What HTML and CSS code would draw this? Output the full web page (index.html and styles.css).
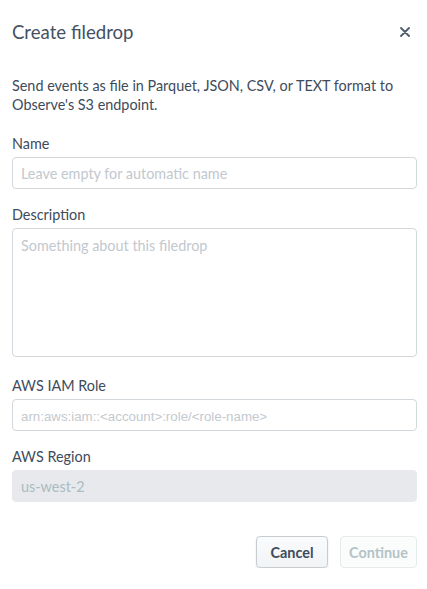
FILE: index.html
```html
<!DOCTYPE html>
<html>
<head>
<meta charset="utf-8">
<link rel="stylesheet" href="styles.css">
</head>
<body>
<div class="modal">
  <div class="header">
    <h1 class="title">Create filedrop</h1>
    <button class="close" aria-label="Close">
      <svg width="10" height="10" viewBox="0 0 10 10"><path d="M1 1L9 9M9 1L1 9" stroke="#4e5c6b" stroke-width="1.8" stroke-linecap="round"/></svg>
    </button>
  </div>
  <p class="intro">Send events as file in Parquet, JSON, CSV, or TEXT format to Observe's S3 endpoint.</p>
  <div class="field">
    <label class="label">Name</label>
    <input class="input" type="text" placeholder="Leave empty for automatic name">
  </div>
  <div class="field">
    <label class="label">Description</label>
    <textarea class="input textarea" placeholder="Something about this filedrop"></textarea>
  </div>
  <div class="field field-role">
    <label class="label">AWS IAM Role</label>
    <input class="input arn" type="text" placeholder="arn:aws:iam::<account>:role/<role-name>">
  </div>
  <div class="field">
    <label class="label">AWS Region</label>
    <input class="input disabled" type="text" value="us-west-2" disabled>
  </div>
  <div class="actions">
    <button class="btn cancel">Cancel</button>
    <button class="btn continue" disabled>Continue</button>
  </div>
</div>
</body>
</html>
```
FILE: styles.css
```css
html, body {
  margin: 0;
  padding: 0;
  background: #ffffff;
}
body {
  font-family: Lato, "Noto Sans", sans-serif;
  color: #3e4b5b;
}
.modal {
  padding: 0 10px 0 12px;
}
.header {
  display: flex;
  justify-content: space-between;
  align-items: center;
  padding-top: 20px;
}
.title {
  margin: 0;
  font-size: 18.6px;
  line-height: 24px;
  font-weight: 400;
  color: #435162;
}
.close {
  border: 0;
  background: none;
  padding: 0;
  margin-right: 7px;
  width: 10px;
  height: 10px;
  display: flex;
}
.intro {
  margin: 32px 0 0;
  font-size: 14.4px;
  line-height: 19px;
  color: #3e4b5b;
}
.field {
  display: flex;
  flex-direction: column;
  margin-top: 16px;
}
.intro + .field {
  margin-top: 20px;
}
.field-role {
  margin-top: 19px;
}
.label {
  font-size: 14.4px;
  line-height: 20px;
  color: #3e4b5b;
  margin-bottom: 3px;
}
.input {
  box-sizing: border-box;
  width: 100%;
  height: 32px;
  margin: 0;
  padding: 0 8px;
  border: 1px solid #d3d8dd;
  border-radius: 4px;
  background: #fff;
  font-family: Lato, "Noto Sans", sans-serif;
  font-size: 14.4px;
  color: #3e4b5b;
  outline: none;
}
.input::placeholder {
  color: #c2c8ce;
}
.textarea {
  height: 129px;
  padding: 8px;
  resize: none;
  display: block;
}
.arn::placeholder {
  font-family: "Liberation Sans", Arial, sans-serif;
  font-size: 13.3px;
  color: #c4c9ce;
}
.disabled {
  background: #e7e9ec;
  border-color: #e7e9ec;
  color: #a9bcc2;
  -webkit-text-fill-color: #a9bcc2;
  opacity: 1;
}
.actions {
  display: flex;
  justify-content: flex-end;
  gap: 12px;
  margin-top: 34px;
}
.btn {
  box-sizing: border-box;
  height: 32px;
  padding: 0;
  border-radius: 4px;
  font-family: Lato, "Noto Sans", sans-serif;
  font-size: 14.4px;
  font-weight: 700;
  text-align: center;
}
.cancel {
  width: 72px;
  background: linear-gradient(#fafbfc, #f1f3f5);
  border: 1px solid #c7ccd1;
  box-shadow: 0 1px 2px rgba(30, 40, 50, 0.12);
  color: #3e4b5b;
}
.continue {
  width: 77px;
  background: #fbfcfc;
  border: 1px solid #e7eaed;
  color: #b4c3c8;
}
```
